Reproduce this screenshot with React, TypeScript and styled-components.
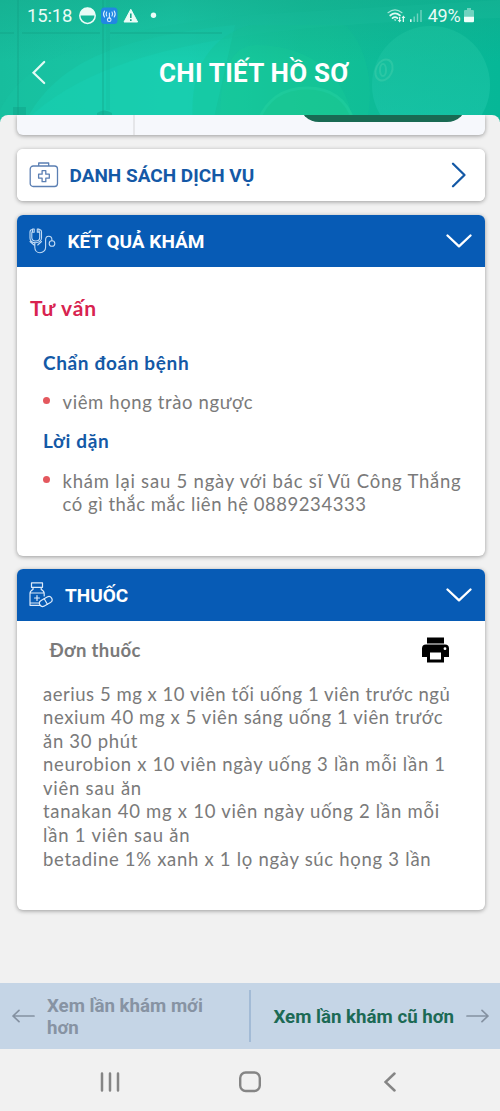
import React from 'react';
import styled, { createGlobalStyle } from 'styled-components';

const Global = createGlobalStyle`
  * { box-sizing: border-box; }
  html, body { margin: 0; padding: 0; background: #f1f1f1; }
  body { font-family: Roboto, 'Liberation Sans', sans-serif; }
`;

const Screen = styled.div`
  display: flex;
  flex-direction: column;
  width: 500px;
  height: 1111px;
  overflow: hidden;
  background: #f1f1f1;
`;

const Header = styled.header`
  position: relative;
  display: flex;
  flex-direction: column;
  height: 122px;
  flex: none;
  background: #17c3a3;
  color: #fff;
`;

const HeaderArt = styled.svg`
  position: absolute;
  inset: 0;
`;

const StatusBar = styled.div`
  position: relative;
  display: flex;
  align-items: center;
  height: 32px;
  padding: 0 26.5px 0 27px;
  font-size: 18.5px;
  line-height: 32px;
  color: #e9fbf6;
`;

const Clock = styled.span`
  width: 51px;
  letter-spacing: -0.15px;
`;

const StatusRight = styled.div`
  display: flex;
  align-items: center;
  margin-left: auto;
`;

const Percent = styled.span`
  margin: 0 3px 0 5px;
  font-size: 18px;
  letter-spacing: -0.2px;
`;

const TitleBar = styled.div`
  position: relative;
  display: grid;
  grid-template-columns: 80px 1fr 72px;
  align-items: center;
  height: 82px;
`;

const BackIcon = styled.svg`
  margin-left: 31px;
`;

const Title = styled.h1`
  margin: 0;
  padding-bottom: 1px;
  text-align: center;
  white-space: nowrap;
  font-size: 26px;
  font-weight: 700;
  letter-spacing: 0.25px;
`;

const Content = styled.main`
  position: relative;
  display: flex;
  flex-direction: column;
  flex: none;
  height: 868px;
  margin-top: -7px;
  padding: 0 15.5px 0 16.5px;
  border-radius: 8px 8px 0 0;
  background: #f1f1f1;
  overflow: hidden;
`;

const Card = styled.section<{ $h: number; $gap: number }>`
  flex: none;
  height: ${(p) => p.$h}px;
  margin-top: ${(p) => p.$gap}px;
  border-radius: 6px;
  background: #fff;
  box-shadow: 0 1px 4px rgba(0, 0, 0, 0.36);
  overflow: hidden;
`;

const CutCard = styled(Card)`
  display: flex;
  border-radius: 0 0 6px 6px;
  background: #f6f8fc;
`;

const CutLabel = styled.div`
  width: 118px;
  border-right: 2px solid #e5e6e9;
`;

const CutValue = styled.div`
  flex: 1;
  display: flex;
  justify-content: flex-end;
  align-items: flex-start;
  padding-right: 17.5px;
`;

const PillButton = styled.div`
  width: 168px;
  height: 40px;
  margin-top: -33px;
  border-radius: 20px;
  background: #196a53;
`;

const CardHead = styled.div<{ $blue?: boolean; $h: number }>`
  display: flex;
  align-items: center;
  height: ${(p) => p.$h}px;
  padding: 0 12.5px 0 12px;
  background: ${(p) => (p.$blue ? '#075bb5' : '#fff')};
  color: ${(p) => (p.$blue ? '#fff' : '#1459a6')};
`;

const HeadTitle = styled.h2<{ $left: number }>`
  flex: 1;
  margin: 0 0 0 ${(p) => p.$left}px;
  padding-top: 1px;
  white-space: nowrap;
  font-size: 19px;
  font-weight: 700;
`;

const NextIcon = styled.svg`
  margin-right: 1px;
`;

const ResultBody = styled.div`
  display: flex;
  flex-direction: column;
  padding: 27px 0 0 13.5px;
  font-family: Lato, 'Noto Sans', sans-serif;
`;

const Topic = styled.h3<{ $track: number }>`
  margin: 0;
  line-height: 28px;
  font-size: 21px;
  font-weight: 700;
  color: #d8234f;
  letter-spacing: ${(p) => p.$track}px;
`;

const SubTitle = styled.h4<{ $gap: number; $track: number }>`
  margin: ${(p) => p.$gap}px 0 0 13px;
  line-height: 24px;
  font-size: 19px;
  font-weight: 700;
  color: #1459a6;
  letter-spacing: ${(p) => p.$track}px;
`;

const Bullet = styled.div<{ $gap: number }>`
  display: flex;
  margin: ${(p) => p.$gap}px 0 0 13px;
`;

const Dot = styled.i`
  width: 7px;
  height: 7px;
  margin: 6px 12.5px 0 0;
  border-radius: 50%;
  background: #e4585e;
`;

const Line = styled.div<{ $track: number }>`
  height: 23.6px;
  line-height: 23.6px;
  white-space: nowrap;
  font-size: 18.5px;
  color: #7a7a7a;
  letter-spacing: ${(p) => p.$track}px;
`;

const RxBody = styled.div`
  display: flex;
  flex-direction: column;
  font-family: Lato, 'Noto Sans', sans-serif;
`;

const RxHead = styled.div`
  display: flex;
  align-items: center;
  justify-content: space-between;
  height: 60px;
  padding: 0 35px 1px 33px;
  font-size: 18.5px;
  font-weight: 700;
  color: #7a7a7a;
  letter-spacing: 0.37px;
`;

const RxList = styled.div`
  padding: 2px 0 0 26.5px;
`;

const Pager = styled.nav`
  display: flex;
  align-items: center;
  flex: none;
  height: 66px;
  background: #c5d5e6;
  font-size: 18.7px;
  line-height: 22px;
  font-weight: 700;
`;

const Newer = styled.div`
  display: flex;
  align-items: center;
  width: 251px;
  height: 52px;
  padding-left: 12px;
  border-right: 2px solid #a3bbd6;
  color: #8793a3;
`;

const Older = styled.div`
  display: flex;
  align-items: center;
  padding-left: 22.5px;
  color: #1c6a55;
`;

const PagerText = styled.span<{ $left: number }>`
  margin-left: ${(p) => p.$left}px;
  margin-right: 11.5px;
  padding-top: 1px;
  white-space: nowrap;
`;

const SystemNav = styled.footer`
  display: flex;
  align-items: center;
  height: 62px;
  padding: 4px 0 0 98px;
`;

const HomeIcon = styled.svg`
  margin: 0 123px 0 117px;
`;

const Down = () => (
  <svg width="26" height="14" viewBox="0 0 26 14" fill="none" stroke="#fff" strokeWidth="2.3" strokeLinecap="round" strokeLinejoin="round">
    <path d="M1.5 1.5 13 12.3 24.5 1.5" />
  </svg>
);

const Stethoscope = () => (
  <svg width="27" height="26" viewBox="0 0 27 26" fill="none" stroke="#c4dcf5" strokeWidth="1.1" strokeLinecap="round" strokeLinejoin="round">
    <path d="M3.500 1.500C2 1.500 1 2.500 1 4v6c0 2.800 2.300 4.700 5.600 4.700s5.900-1.900 5.900-4.700V4c0-1.500-1-2.500-2.500-2.500M3.500 3.800c-.6 0-.7.300-.7.900v4.800c0 2.100 1.500 3.500 3.900 3.500s4-1.400 4-3.500V4.700c0-.6-.1-.9-.7-.9" />
    <path d="M3.500 1h1.700v3.200H3.500zM8.300 1H10v3.200H8.300zM5.800 14.700v4.500c0 3.200 2.200 5.500 5.200 5.500s5.600-2.200 5.600-5.500V12c0-2.300 1.200-3.700 3.100-3.700s3.200 1.300 3.200 3.400v.8M1 13.500l4 3.500M12.500 13.500 8.700 17" />
    <circle cx="23" cy="15.500" r="2.800" />
  </svg>
);

const Medicine = () => (
  <svg width="24" height="26" viewBox="0 0 24 26" fill="none" stroke="#dceafa" strokeWidth="1.200" strokeLinecap="round" strokeLinejoin="round">
    <path d="M2.500.8h11v4.500h-11zM4 5.300v2.200C2.200 8.300 1 9.500 1 11.500v11.800h10M12.200 5.300v2.200c1.800.8 3 2 3 4v2.500M1 11h14M1 21h8.500M8 13.500v5M5.500 16h5" />
    <rect x="10" y="16.300" width="13.500" height="6.500" rx="3.250" transform="rotate(-30 16.700 19.500)" />
    <path d="m15.200 16.800 3.200 5.500" />
  </svg>
);

const FirstAid = () => (
  <svg width="30" height="26" viewBox="0 0 30 26" fill="none" stroke="#5b7fb3" strokeWidth="1.300" strokeLinejoin="round">
    <rect x="1.200" y="4" width="27.300" height="20.500" rx="3" />
    <path d="M9.700 4V1h10v3M13.100 8.700h3.700v3.500h3.500v4h-3.500v3.500h-3.700v-3.500H9.600v-4h3.500z" />
  </svg>
);

const Arrow = ({ flip }: { flip?: boolean }) => (
  <svg width="23" height="14" viewBox="0 0 23 14" fill="none" stroke="#8491a1" strokeWidth="1.700" strokeLinecap="round" strokeLinejoin="round">
    <path d={flip ? 'M1 7h21M16 1.300 22 7l-6 5.700' : 'M22 7H1M7 1.300 1 7l6 5.700'} />
  </svg>
);

const rx: [string, number][] = [
  ['aerius 5 mg x 10 viên tối uống 1 viên trước ngủ', 0.53],
  ['nexium 40 mg x 5 viên sáng uống 1 viên trước', 0.6],
  ['ăn 30 phút', 0.7],
  ['neurobion x 10 viên ngày uống 3 lần mỗi lần 1', 0.66],
  ['viên sau ăn', 0.76],
  ['tanakan 40 mg x 10 viên ngày uống 2 lần mỗi', 0.72],
  ['lần 1 viên sau ăn', 0.76],
  ['betadine 1% xanh x 1 lọ ngày súc họng 3 lần', 0.7],
];

export default function App() {
  return (
    <Screen>
      <Global />
      <Header>
        <HeaderArt width="500" height="122" viewBox="0 0 500 122">
          <defs>
            <linearGradient id="base" x1="0" y1="0" x2="1" y2="0">
              <stop offset="0" stopColor="#17bd9d" />
              <stop offset=".35" stopColor="#19c9a9" />
              <stop offset=".62" stopColor="#12bd98" />
              <stop offset="1" stopColor="#06b797" />
            </linearGradient>
            <linearGradient id="shade" x1="0" y1="0" x2="0" y2="1">
              <stop offset="0" stopColor="#15a98b" stopOpacity=".55" />
              <stop offset=".5" stopColor="#15a98b" stopOpacity="0" />
            </linearGradient>
            <linearGradient id="ball" x1="0" y1="0" x2="0" y2="1">
              <stop offset="0" stopColor="#1abf9c" />
              <stop offset="1" stopColor="#1bc7ad" />
            </linearGradient>
          </defs>
          <rect width="500" height="122" fill="url(#base)" />
          <path d="M25 122C55 65 110 38 235 25l-22 97z" fill="#18d0b2" opacity=".7" />
          <path d="M0 110C30 55 90 32 250 15L500 0v18C260 24 100 45 25 122H0z" fill="#19c3a2" opacity=".45" />
          <path d="M193 122c-4-50 15-85 57-97h95c20 20 30 55 22 97z" fill="#14c795" opacity=".35" />
          <path d="M220 122c0-50 10-75 35-77 50 0 90 25 98 77z" fill="#19cc98" opacity=".3" />
          <path d="M258 122c8-22 25-34 49-34s40 12 47 34" fill="#1fc990" stroke="#27d3a0" strokeWidth="3" opacity=".45" />
          <rect width="500" height="122" fill="url(#shade)" />
          <g stroke="#129d82" opacity=".3">
            <path d="M18 0v122M103 0v122" strokeWidth="2" />
            <path d="M0 33h14M22 33h78M110 33h112" strokeWidth="2" />
            <path d="M108 0v110" strokeWidth="4" opacity=".4" />
          </g>
          <path d="M13 107h13v15H13zM97 113q7-5 15 0v9H97z" fill="#0f9c81" opacity=".4" />
          <circle cx="431" cy="85" r="59" fill="url(#ball)" opacity=".65" />
          <g fill="none" stroke="#4bd2ae" opacity=".4" strokeWidth="2">
            <ellipse cx="384" cy="70" rx="8" ry="11" transform="rotate(25 384 70)" />
            <ellipse cx="383" cy="70" rx="3" ry="6" />
          </g>
        </HeaderArt>
        <StatusBar>
          <Clock>15:18</Clock>
          <svg width="80" height="20" viewBox="0 0 80 20">
            <circle cx="9.500" cy="9.700" r="7.700" fill="none" stroke="#eafcf7" strokeWidth="1.500" />
            <path d="M1.800 9.500a7.700 7.700 0 0 1 15.400 0z" fill="#eafcf7" />
            <rect x="23" y="1.500" width="16.500" height="16.500" rx="3.500" fill="#2188e2" />
            <g fill="none" stroke="#d9efff" strokeWidth="1.100" strokeLinecap="round">
              <path d="M28.700 6q-1.200 2 0 4M26.500 5q-2 3 0 6M34 6q1.200 2 0 4M36.200 5q2 3 0 6" />
              <path d="M31.400 7v5" />
              <circle cx="31.200" cy="13.700" r="1.800" />
            </g>
            <path d="m52.800 3.300 6.800 12.700H46z" fill="#eafcf7" stroke="#eafcf7" strokeLinejoin="round" />
            <path d="M52.800 7.500v4.500M52.800 13.200v1.700" stroke="#17a88b" strokeWidth="1.600" />
            <circle cx="75.500" cy="9.300" r="2.700" fill="#eafcf7" />
          </svg>
          <StatusRight>
            <svg width="36" height="18" viewBox="0 0 36 18">
              <g fill="none" stroke="#e3f9f3" strokeLinecap="round">
                <path d="M1 5.700Q8 0 15 5.700" strokeWidth="1.100" opacity=".7" />
                <path d="M3.200 8.500Q8 4.300 13 8.500M5.500 11.200Q8 9 10.500 11.200" strokeWidth="1.700" />
              </g>
              <path d="m6.800 12.400 1.400 1.500 1.300-1.500zM12 10h1.300v3h1.200l-1.900 2.400-1.900-2.400H12zM17 15h-1.300v-4h-1.200l1.900-2.600 1.900 2.600H17z" fill="#e3f9f3" />
              <path d="M23 12.300h1.600V15H23z" fill="#e3f9f3" />
              <path d="M26.500 9.500h1.400V15h-1.400zM29.800 6.500h1.400V15h-1.400zM33.300 3h1.400v12h-1.400z" fill="#e3f9f3" opacity=".45" />
            </svg>
            <Percent>49%</Percent>
            <svg width="10" height="16" viewBox="0 0 10 16">
              <path d="M3 0h4v2h2.200l.8.800V9H0V2.800L.8 2H3z" fill="#e3f9f3" opacity=".45" />
              <path d="M0 8.700h10v4.800l-.8.800H.8l-.8-.8z" fill="#f0fffb" />
            </svg>
          </StatusRight>
        </StatusBar>
        <TitleBar>
          <BackIcon width="16" height="26" viewBox="0 0 16 26" fill="none" stroke="#e3faf4" strokeWidth="2.200" strokeLinecap="round">
            <path d="M13.200 2 2.500 12.700 13.200 23" />
          </BackIcon>
          <Title>CHI TIẾT HỒ SƠ</Title>
        </TitleBar>
      </Header>

      <Content>
        <CutCard $h={20} $gap={0}>
          <CutLabel />
          <CutValue>
            <PillButton />
          </CutValue>
        </CutCard>

        <Card $h={51.5} $gap={14}>
          <CardHead $h={51.5}>
            <FirstAid />
            <HeadTitle $left={11}>DANH SÁCH DỊCH VỤ</HeadTitle>
            <NextIcon width="20" height="26" viewBox="0 0 20 26" fill="none" stroke="#1459a6" strokeWidth="2.300" strokeLinecap="round" strokeLinejoin="round">
              <path d="M2 1.800 13.500 13 2 24.200" />
            </NextIcon>
          </CardHead>
        </Card>

        <Card $h={340.5} $gap={14.5}>
          <CardHead $blue $h={52}>
            <Stethoscope />
            <HeadTitle $left={12}>KẾT QUẢ KHÁM</HeadTitle>
            <Down />
          </CardHead>
          <ResultBody>
            <Topic $track={0.9}>Tư vấn</Topic>
            <SubTitle $gap={29} $track={0.64}>Chẩn đoán bệnh</SubTitle>
            <Bullet $gap={16}>
              <Dot />
              <Line $track={0.61}>viêm họng trào ngược</Line>
            </Bullet>
            <SubTitle $gap={14} $track={0.64}>Lời dặn</SubTitle>
            <Bullet $gap={17}>
              <Dot />
              <div>
                <Line $track={0.78}>khám lại sau 5 ngày với bác sĩ Vũ Công Thắng</Line>
                <Line $track={0.54}>có gì thắc mắc liên hệ 0889234333</Line>
              </div>
            </Bullet>
          </ResultBody>
        </Card>

        <Card $h={341} $gap={13.5}>
          <CardHead $blue $h={51.5}>
            <Medicine />
            <HeadTitle $left={12.5}>THUỐC</HeadTitle>
            <Down />
          </CardHead>
          <RxBody>
            <RxHead>
              <span>Đơn thuốc</span>
              <svg width="29" height="26" viewBox="0 0 29 26">
                <path d="M6 .5h17v6H6z" />
                <path d="M5 7.500h19a4 4 0 0 1 4 4V20h-5v5.500H6V20H1v-8.500a4 4 0 0 1 4-4zM9 15.500v7h11v-7z" fillRule="evenodd" />
                <circle cx="24" cy="11.700" r="1.400" fill="#fff" />
              </svg>
            </RxHead>
            <RxList>
              {rx.map(([text, track]) => (
                <Line key={text} $track={track}>{text}</Line>
              ))}
            </RxList>
          </RxBody>
        </Card>
      </Content>

      <Pager>
        <Newer>
          <Arrow />
          <PagerText $left={12}>Xem lần khám mới<br />hơn</PagerText>
        </Newer>
        <Older>
          <PagerText $left={0}>Xem lần khám cũ hơn</PagerText>
          <Arrow flip />
        </Older>
      </Pager>

      <SystemNav>
        <svg width="24" height="22" viewBox="0 0 24 22" stroke="#858585" strokeWidth="2.500" strokeLinecap="round">
          <path d="M4 2.500v17M12 2.500v17M20 2.500v17" />
        </svg>
        <HomeIcon width="22" height="22" viewBox="0 0 22 22" fill="none" stroke="#858585" strokeWidth="2.400">
          <rect x="1.200" y="1.500" width="19.600" height="18.500" rx="5.500" />
        </HomeIcon>
        <svg width="16" height="22" viewBox="0 0 16 22" fill="none" stroke="#858585" strokeWidth="2.500" strokeLinecap="round">
          <path d="M10.500 2.500 1.500 11l9 8.500" />
        </svg>
      </SystemNav>
    </Screen>
  );
}
